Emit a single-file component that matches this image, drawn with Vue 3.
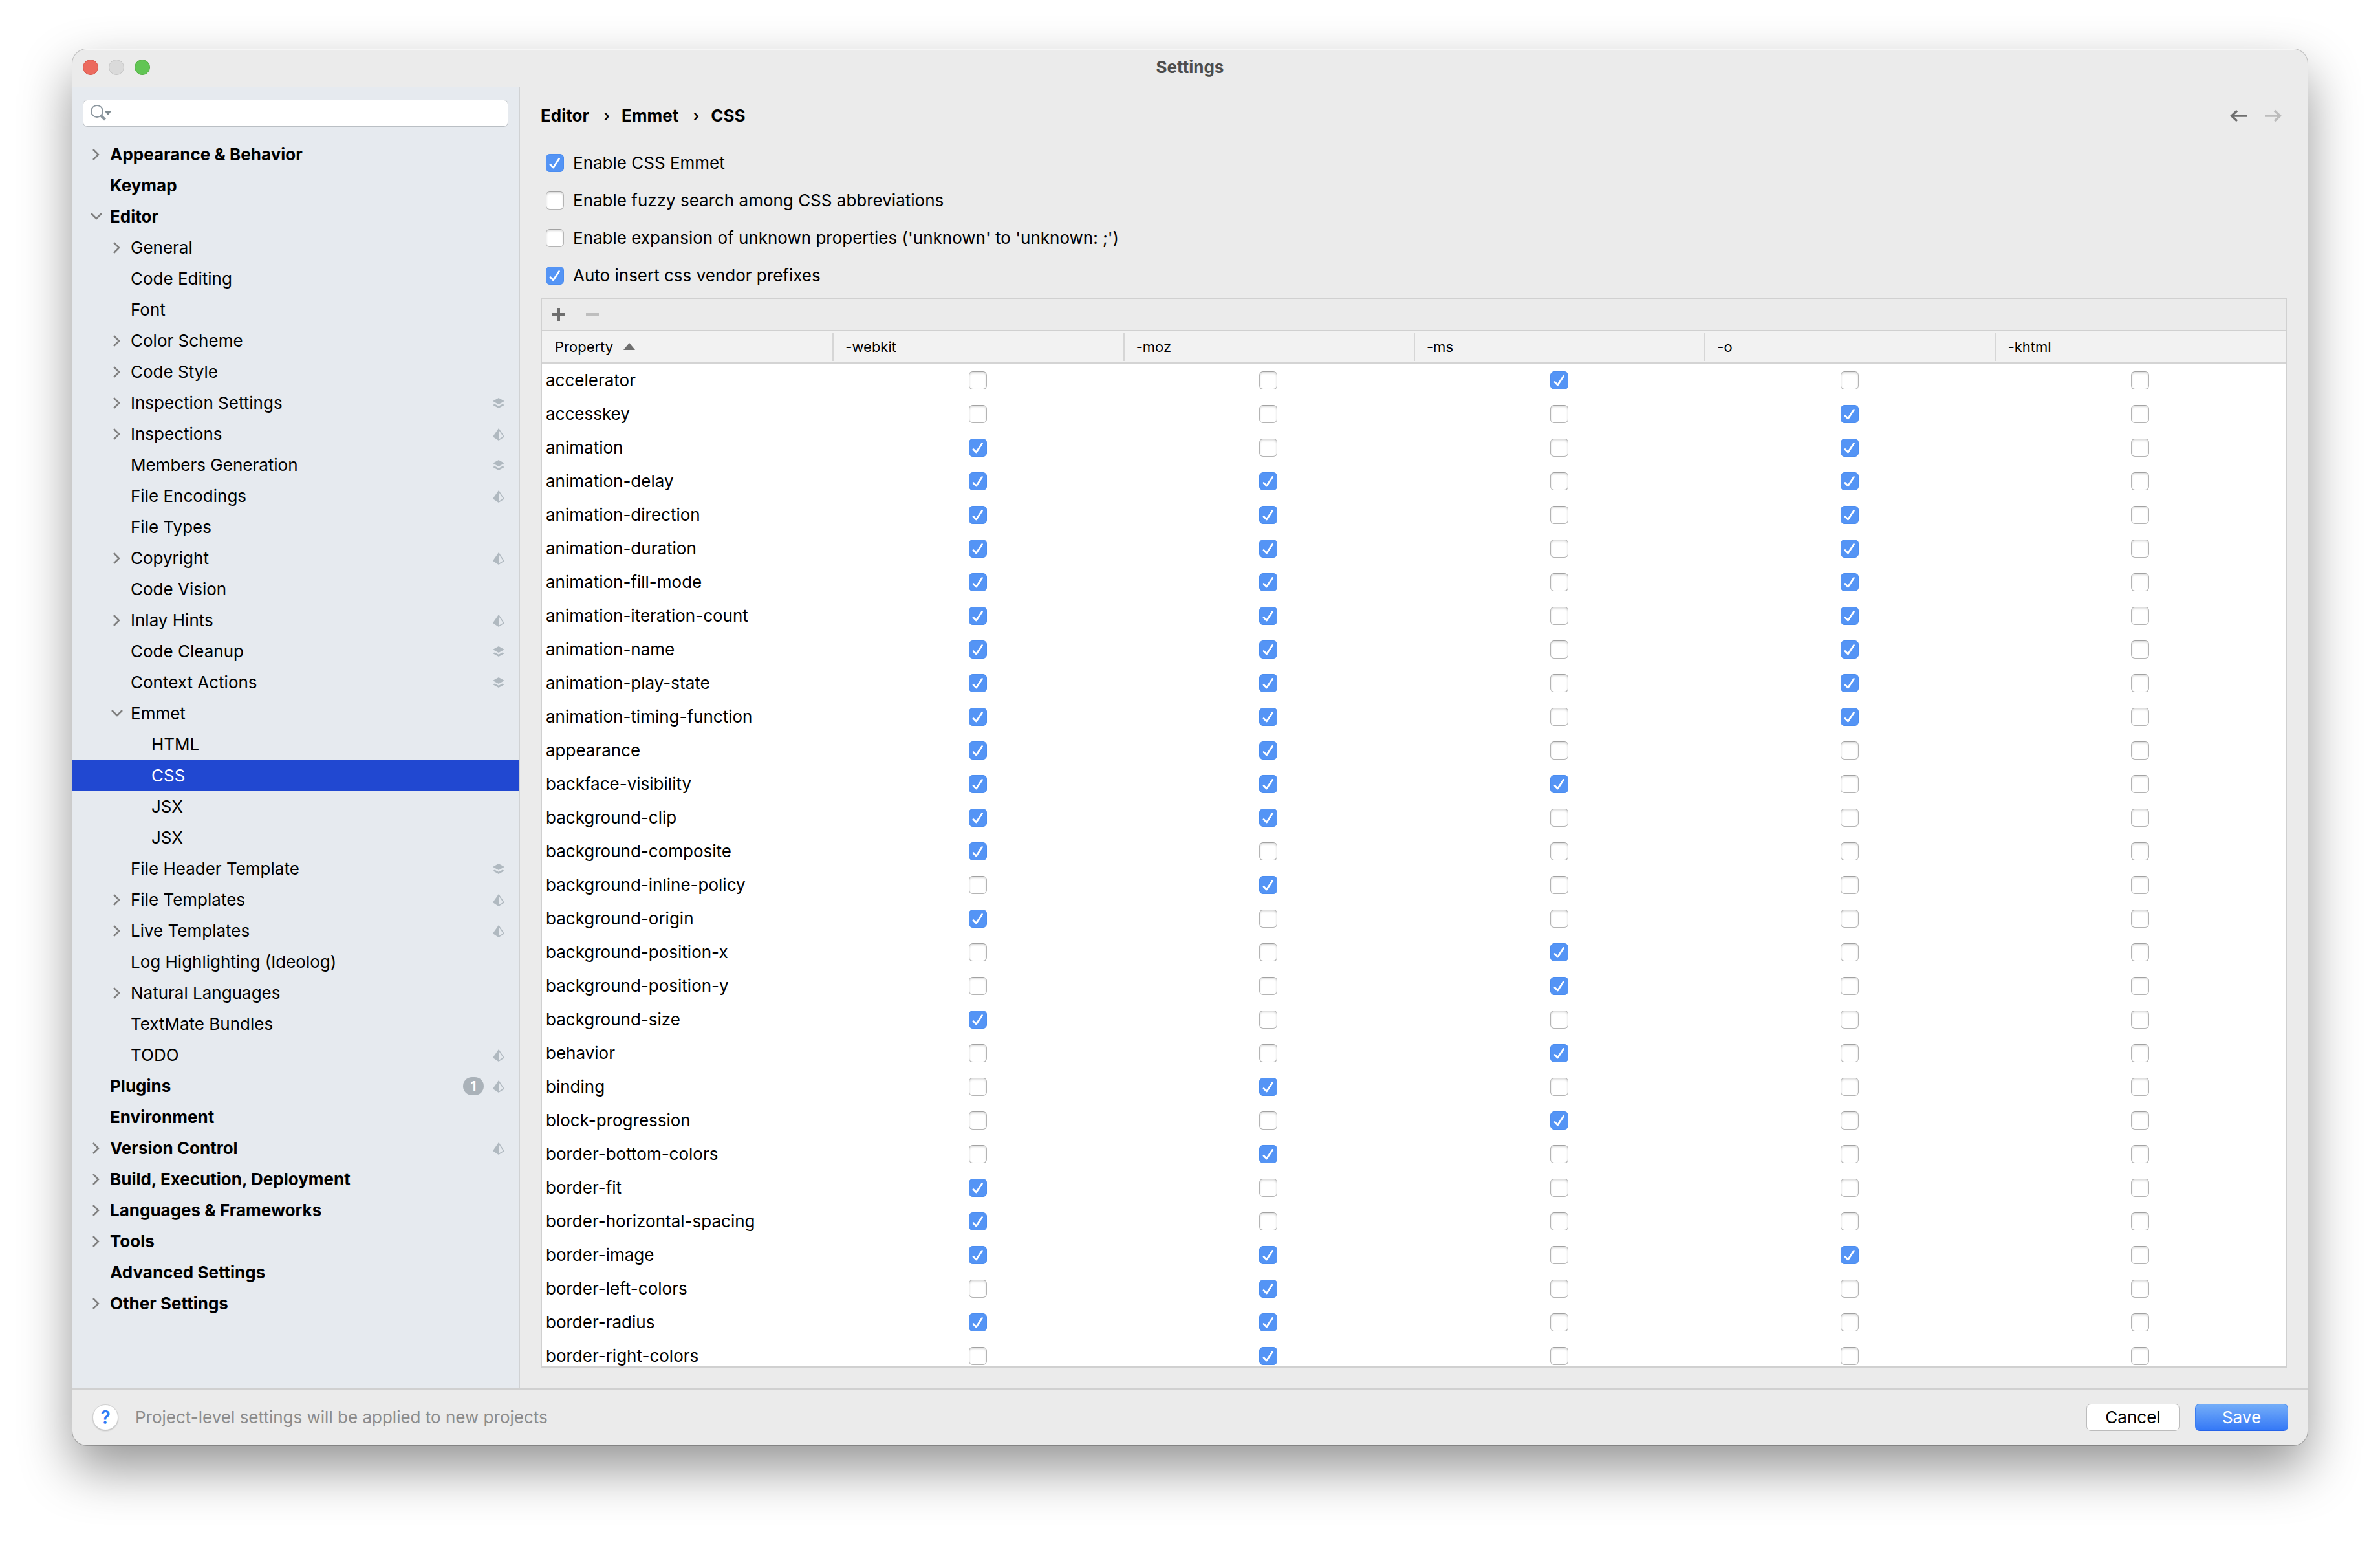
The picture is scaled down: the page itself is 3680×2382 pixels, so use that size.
<script setup>
import { ref } from 'vue'

const query = ref('')

const tree = [
  { label: 'Appearance & Behavior', level: 0, arrow: 'right' },
  { label: 'Keymap', level: 0 },
  { label: 'Editor', level: 0, arrow: 'down' },
  { label: 'General', level: 1, arrow: 'right' },
  { label: 'Code Editing', level: 1 },
  { label: 'Font', level: 1 },
  { label: 'Color Scheme', level: 1, arrow: 'right' },
  { label: 'Code Style', level: 1, arrow: 'right' },
  { label: 'Inspection Settings', level: 1, arrow: 'right', mark: 'layers' },
  { label: 'Inspections', level: 1, arrow: 'right', mark: 'prism' },
  { label: 'Members Generation', level: 1, mark: 'layers' },
  { label: 'File Encodings', level: 1, mark: 'prism' },
  { label: 'File Types', level: 1 },
  { label: 'Copyright', level: 1, arrow: 'right', mark: 'prism' },
  { label: 'Code Vision', level: 1 },
  { label: 'Inlay Hints', level: 1, arrow: 'right', mark: 'prism' },
  { label: 'Code Cleanup', level: 1, mark: 'layers' },
  { label: 'Context Actions', level: 1, mark: 'layers' },
  { label: 'Emmet', level: 1, arrow: 'down' },
  { label: 'HTML', level: 2 },
  { label: 'CSS', level: 2, selected: true },
  { label: 'JSX', level: 2 },
  { label: 'JSX', level: 2 },
  { label: 'File Header Template', level: 1, mark: 'layers' },
  { label: 'File Templates', level: 1, arrow: 'right', mark: 'prism' },
  { label: 'Live Templates', level: 1, arrow: 'right', mark: 'prism' },
  { label: 'Log Highlighting (Ideolog)', level: 1 },
  { label: 'Natural Languages', level: 1, arrow: 'right' },
  { label: 'TextMate Bundles', level: 1 },
  { label: 'TODO', level: 1, mark: 'prism' },
  { label: 'Plugins', level: 0, badge: 1, mark: 'prism' },
  { label: 'Environment', level: 0 },
  { label: 'Version Control', level: 0, arrow: 'right', mark: 'prism' },
  { label: 'Build, Execution, Deployment', level: 0, arrow: 'right' },
  { label: 'Languages & Frameworks', level: 0, arrow: 'right' },
  { label: 'Tools', level: 0, arrow: 'right' },
  { label: 'Advanced Settings', level: 0 },
  { label: 'Other Settings', level: 0, arrow: 'right' },
]

const options = ref([
  { label: 'Enable CSS Emmet', on: true },
  { label: 'Enable fuzzy search among CSS abbreviations', on: false },
  { label: "Enable expansion of unknown properties ('unknown' to 'unknown: ;')", on: false },
  { label: 'Auto insert css vendor prefixes', on: true },
])

const vendors = ['webkit', 'moz', 'ms', 'o', 'khtml']

const prefixes = [
  ['accelerator', 'ms'],
  ['accesskey', 'o'],
  ['animation', 'webkit o'],
  ['animation-delay', 'webkit moz o'],
  ['animation-direction', 'webkit moz o'],
  ['animation-duration', 'webkit moz o'],
  ['animation-fill-mode', 'webkit moz o'],
  ['animation-iteration-count', 'webkit moz o'],
  ['animation-name', 'webkit moz o'],
  ['animation-play-state', 'webkit moz o'],
  ['animation-timing-function', 'webkit moz o'],
  ['appearance', 'webkit moz'],
  ['backface-visibility', 'webkit moz ms'],
  ['background-clip', 'webkit moz'],
  ['background-composite', 'webkit'],
  ['background-inline-policy', 'moz'],
  ['background-origin', 'webkit'],
  ['background-position-x', 'ms'],
  ['background-position-y', 'ms'],
  ['background-size', 'webkit'],
  ['behavior', 'ms'],
  ['binding', 'moz'],
  ['block-progression', 'ms'],
  ['border-bottom-colors', 'moz'],
  ['border-fit', 'webkit'],
  ['border-horizontal-spacing', 'webkit'],
  ['border-image', 'webkit moz o'],
  ['border-left-colors', 'moz'],
  ['border-radius', 'webkit moz'],
  ['border-right-colors', 'moz'],
]

const rows = ref(
  prefixes.map(([name, list]) => ({
    name,
    on: Object.fromEntries(vendors.map((v) => [v, list.split(' ').includes(v)])),
  })),
)
</script>

<template>
  <div class="desktop">
    <main class="window">
      <header class="titlebar">
        <div class="lights">
          <button class="light close" aria-label="Close"></button>
          <button class="light minimize" aria-label="Minimize" disabled></button>
          <button class="light zoom" aria-label="Zoom"></button>
        </div>
        <h1 class="title">Settings</h1>
      </header>

      <div class="body">
        <aside class="sidebar">
          <label class="search">
            <svg width="34" height="28" viewBox="0 0 34 28" aria-hidden="true">
              <circle cx="11" cy="11" r="9" fill="none" stroke="#8c979f" stroke-width="2" />
              <path d="M17 17.500L23.500 24" stroke="#8c979f" stroke-width="4" />
              <path d="M23 11h10l-5 6z" fill="#7f8b91" />
            </svg>
            <input v-model="query" type="text" aria-label="Search settings" />
          </label>

          <nav class="tree">
            <a
              v-for="(item, i) in tree"
              :key="i"
              href="#"
              class="node"
              :class="['level-' + item.level, { selected: item.selected }]"
            >
              <span class="arrow">
                <svg v-if="item.arrow === 'right'" width="20" height="20" viewBox="0 0 20 20">
                  <path d="M6 2l8 8-8 8" />
                </svg>
                <svg v-else-if="item.arrow === 'down'" width="20" height="20" viewBox="0 0 20 20">
                  <path d="M3 5l8 8 8-8" />
                </svg>
              </span>
              <span class="label">{{ item.label }}</span>
              <span v-if="item.badge" class="badge">{{ item.badge }}</span>
              <svg v-if="item.mark === 'layers'" class="mark" width="18" height="20" viewBox="0 0 18 20">
                <path d="M9 2L18 7 9 12 0 7z" />
                <path d="M0 13L3 11.500l6 3.200L15 11.500l3 1.500L9 18z" />
              </svg>
              <svg v-else-if="item.mark === 'prism'" class="mark" width="18" height="20" viewBox="0 0 18 20">
                <path d="M9 1v19L0 14z" />
                <path d="M9 2l8 12-8 5" fill="none" stroke="#b0b9c0" stroke-width="1.500" />
              </svg>
            </a>
          </nav>
        </aside>

        <section class="content">
          <div class="heading">
            <nav class="crumbs" aria-label="Breadcrumb">
              <a href="#">Editor</a>
              <span class="sep">›</span>
              <a href="#">Emmet</a>
              <span class="sep">›</span>
              <a href="#">CSS</a>
            </nav>
            <div class="history">
              <button class="plain" aria-label="Back">
                <svg width="26" height="22" viewBox="0 0 26 22">
                  <path d="M2 11h24M11 3L2.500 11 11 19" fill="none" stroke="#6e6e6e" stroke-width="3.500" />
                </svg>
              </button>
              <button class="plain" aria-label="Forward" disabled>
                <svg width="26" height="22" viewBox="0 0 26 22">
                  <path d="M24 11H0M15 3l8.500 8L15 19" fill="none" stroke="#bcbcbc" stroke-width="3.500" />
                </svg>
              </button>
            </div>
          </div>

          <div class="options">
            <label v-for="opt in options" :key="opt.label" class="option">
              <input v-model="opt.on" type="checkbox" class="check" />
              <span>{{ opt.label }}</span>
            </label>
          </div>

          <div class="panel">
            <div class="toolbar">
              <button class="plain" aria-label="Add">
                <svg width="20" height="20" viewBox="0 0 20 20">
                  <path d="M10 0v20M0 10h20" stroke="#6e6e6e" stroke-width="4" />
                </svg>
              </button>
              <button class="plain" aria-label="Remove" disabled>
                <svg width="20" height="20" viewBox="0 0 20 20">
                  <path d="M0 10h20" stroke="#bebebe" stroke-width="4" />
                </svg>
              </button>
            </div>
            <table class="grid">
              <thead>
                <tr>
                  <th scope="col">
                    <div class="th">
                      Property
                      <svg width="18" height="12" viewBox="0 0 18 12" aria-hidden="true">
                        <path d="M9 0l9 11H0z" fill="#6e6e6e" />
                      </svg>
                    </div>
                  </th>
                  <th v-for="v in vendors" :key="v" scope="col">
                    <div class="th divided">-{{ v }}</div>
                  </th>
                </tr>
              </thead>
              <tbody>
                <tr v-for="row in rows" :key="row.name">
                  <td class="name">{{ row.name }}</td>
                  <td v-for="v in vendors" :key="v" class="cell">
                    <input v-model="row.on[v]" type="checkbox" class="check" :aria-label="row.name + ' -' + v" />
                  </td>
                </tr>
              </tbody>
            </table>
          </div>
        </section>
      </div>

      <footer class="footer">
        <button class="help" aria-label="Help">?</button>
        <p class="note">Project-level settings will be applied to new projects</p>
        <button class="btn">Cancel</button>
        <button class="btn primary">Save</button>
      </footer>
    </main>
  </div>
</template>

<style>
body {
  margin: 0;
  background: #fff;
}
</style>

<style scoped>
* {
  box-sizing: border-box;
}

.desktop {
  height: 100vh;
  padding: 76px 112px 148px;
  display: flex;
  overflow: hidden;
  font-family: Inter, 'Noto Sans', sans-serif;
  font-size: 26px;
  line-height: 32px;
  color: #000;
}

.window {
  flex: 1;
  min-width: 0;
  display: flex;
  flex-direction: column;
  overflow: hidden;
  background: #ebebeb;
  border-radius: 22px;
  box-shadow:
    0 0 0 1px rgba(0, 0, 0, 0.22),
    0 36px 80px rgba(0, 0, 0, 0.42);
}

a {
  color: inherit;
  text-decoration: none;
}

button {
  font: inherit;
  border: 0;
  padding: 0;
}

.plain {
  display: flex;
  background: none;
}

svg {
  display: block;
  flex: none;
}

/* Title bar */
.titlebar {
  flex: none;
  height: 58px;
  padding: 0 16px 2px;
  display: grid;
  grid-template-columns: 1fr auto 1fr;
  align-items: center;
  box-shadow: inset 0 2px #f6f6f6;
}

.lights {
  display: flex;
  gap: 16px;
}

.light {
  width: 24px;
  height: 24px;
  border-radius: 50%;
  border: 1px solid #d8d8d8;
}

.close {
  background: #ec6a5e;
  border-color: #d5564b;
}

.minimize {
  background: #dadada;
  border-color: #c3c3c3;
}

.zoom {
  background: #61c554;
  border-color: #52aa42;
}

.title {
  margin: 0;
  font-size: 26px;
  font-weight: 700;
  color: #4d4d4d;
}

/* Sidebar */
.body {
  flex: 1;
  min-height: 0;
  display: flex;
}

.sidebar {
  flex: none;
  width: 692px;
  padding-top: 20px;
  overflow: hidden;
  background: #e6eaef;
  border-right: 2px solid #d0d2d4;
}

.search {
  display: flex;
  align-items: center;
  height: 42px;
  margin: 0 16px 18px;
  padding-left: 10px;
  background: #fff;
  border: 1px solid #babfc4;
  border-radius: 7px;
}

.search input {
  flex: 1;
  min-width: 0;
  border: 0;
  outline: 0;
  background: none;
  font: inherit;
}

.node {
  display: flex;
  align-items: center;
  height: 48px;
  padding-top: 2px;
  padding-right: 22px;
}

.level-0 {
  padding-left: 26px;
  font-weight: 700;
}

.level-1 {
  padding-left: 58px;
}

.level-2 {
  padding-left: 90px;
}

.selected {
  background: #2148d1;
  color: #fff;
}

.arrow {
  flex: none;
  width: 32px;
}

.arrow path {
  fill: none;
  stroke: #7f7f7f;
  stroke-width: 2.5;
}

.label {
  flex: 1;
  white-space: nowrap;
}

.badge {
  width: 32px;
  height: 28px;
  margin-right: 14px;
  border-radius: 14px;
  background: #aab2b9;
  color: #fff;
  font-size: 22px;
  font-weight: 600;
  line-height: 28px;
  text-align: center;
}

.mark {
  fill: #b0b9c0;
}

/* Content */
.content {
  flex: 1;
  min-width: 0;
  display: flex;
  flex-direction: column;
  padding: 0 32px 32px;
}

.heading {
  flex: none;
  height: 89px;
  display: flex;
  align-items: center;
  justify-content: space-between;
  padding-right: 8px;
}

.crumbs {
  display: flex;
  font-weight: 700;
}

.sep {
  width: 50px;
  padding-left: 4px;
  text-align: center;
  font-weight: 500;
}

.history {
  display: flex;
  gap: 28px;
}

.options {
  flex: none;
  padding-left: 8px;
}

.option {
  display: flex;
  align-items: center;
  gap: 14px;
  width: fit-content;
  height: 58px;
}

.check {
  appearance: none;
  flex: none;
  display: block;
  width: 28px;
  height: 28px;
  margin: 0;
  border: 1px solid #b4b4b4;
  border-top-color: #a2a2a2;
  border-radius: 6px;
  background: #fff;
  box-shadow: inset 0 2px 3px rgba(0, 0, 0, 0.14);
}

.check:checked {
  border-color: #4b8df0;
  background: #5494f5
    url("data:image/svg+xml,%3Csvg xmlns='http://www.w3.org/2000/svg' viewBox='0 0 26 26'%3E%3Cpath d='M6 15.500L10.500 20 19.500 6.500' fill='none' stroke='%23fff' stroke-width='2.800' stroke-linecap='round' stroke-linejoin='round'/%3E%3C/svg%3E")
    center / 26px 26px no-repeat;
  box-shadow: none;
}

.panel {
  flex: 1;
  min-height: 0;
  margin-top: 5px;
  overflow: hidden;
  background: #fff;
  border: 2px solid #d0d0d0;
}

.toolbar {
  display: flex;
  align-items: center;
  gap: 32px;
  height: 50px;
  padding-left: 16px;
  background: #ebebeb;
  border-bottom: 2px solid #d0d0d0;
}

.grid {
  width: 100%;
  table-layout: fixed;
  border-collapse: separate;
  border-spacing: 0;
}

.grid th {
  height: 50px;
  padding: 0;
  background: #f2f2f2;
  border-bottom: 2px solid #d4d4d4;
  font-size: 22px;
  font-weight: 400;
  text-align: left;
}

.th {
  display: flex;
  align-items: center;
  gap: 16px;
  height: 44px;
  padding-left: 20px;
}

.divided {
  padding-left: 18px;
  border-left: 2px solid #d6d6d6;
}

.grid td {
  height: 52px;
  padding: 0;
}

.grid .name {
  padding-left: 6px;
  white-space: nowrap;
}

.cell .check {
  margin: 0 auto;
}

/* Footer */
.footer {
  flex: none;
  display: flex;
  align-items: center;
  gap: 24px;
  height: 88px;
  padding: 0 30px 0 31px;
  border-top: 2px solid #d0d0d0;
}

.help {
  width: 40px;
  height: 40px;
  border: 1px solid #cfcfcf;
  border-radius: 50%;
  background: #fff;
  box-shadow: 0 1px 2px rgba(0, 0, 0, 0.2);
  color: #2f7bf6;
  font-size: 28px;
  font-weight: 600;
  line-height: 38px;
}

.note {
  flex: 1;
  margin: 0 0 0 2px;
  color: #8c8c8c;
}

.btn {
  width: 144px;
  height: 42px;
  border: 1px solid #bcbcbc;
  border-radius: 7px;
  background: #fff;
  color: #000;
}

.primary {
  border-color: #4a90ee #3a7cf0 #2563ea;
  background: linear-gradient(#74adf8, #3478f6);
  color: #fff;
}
</style>
